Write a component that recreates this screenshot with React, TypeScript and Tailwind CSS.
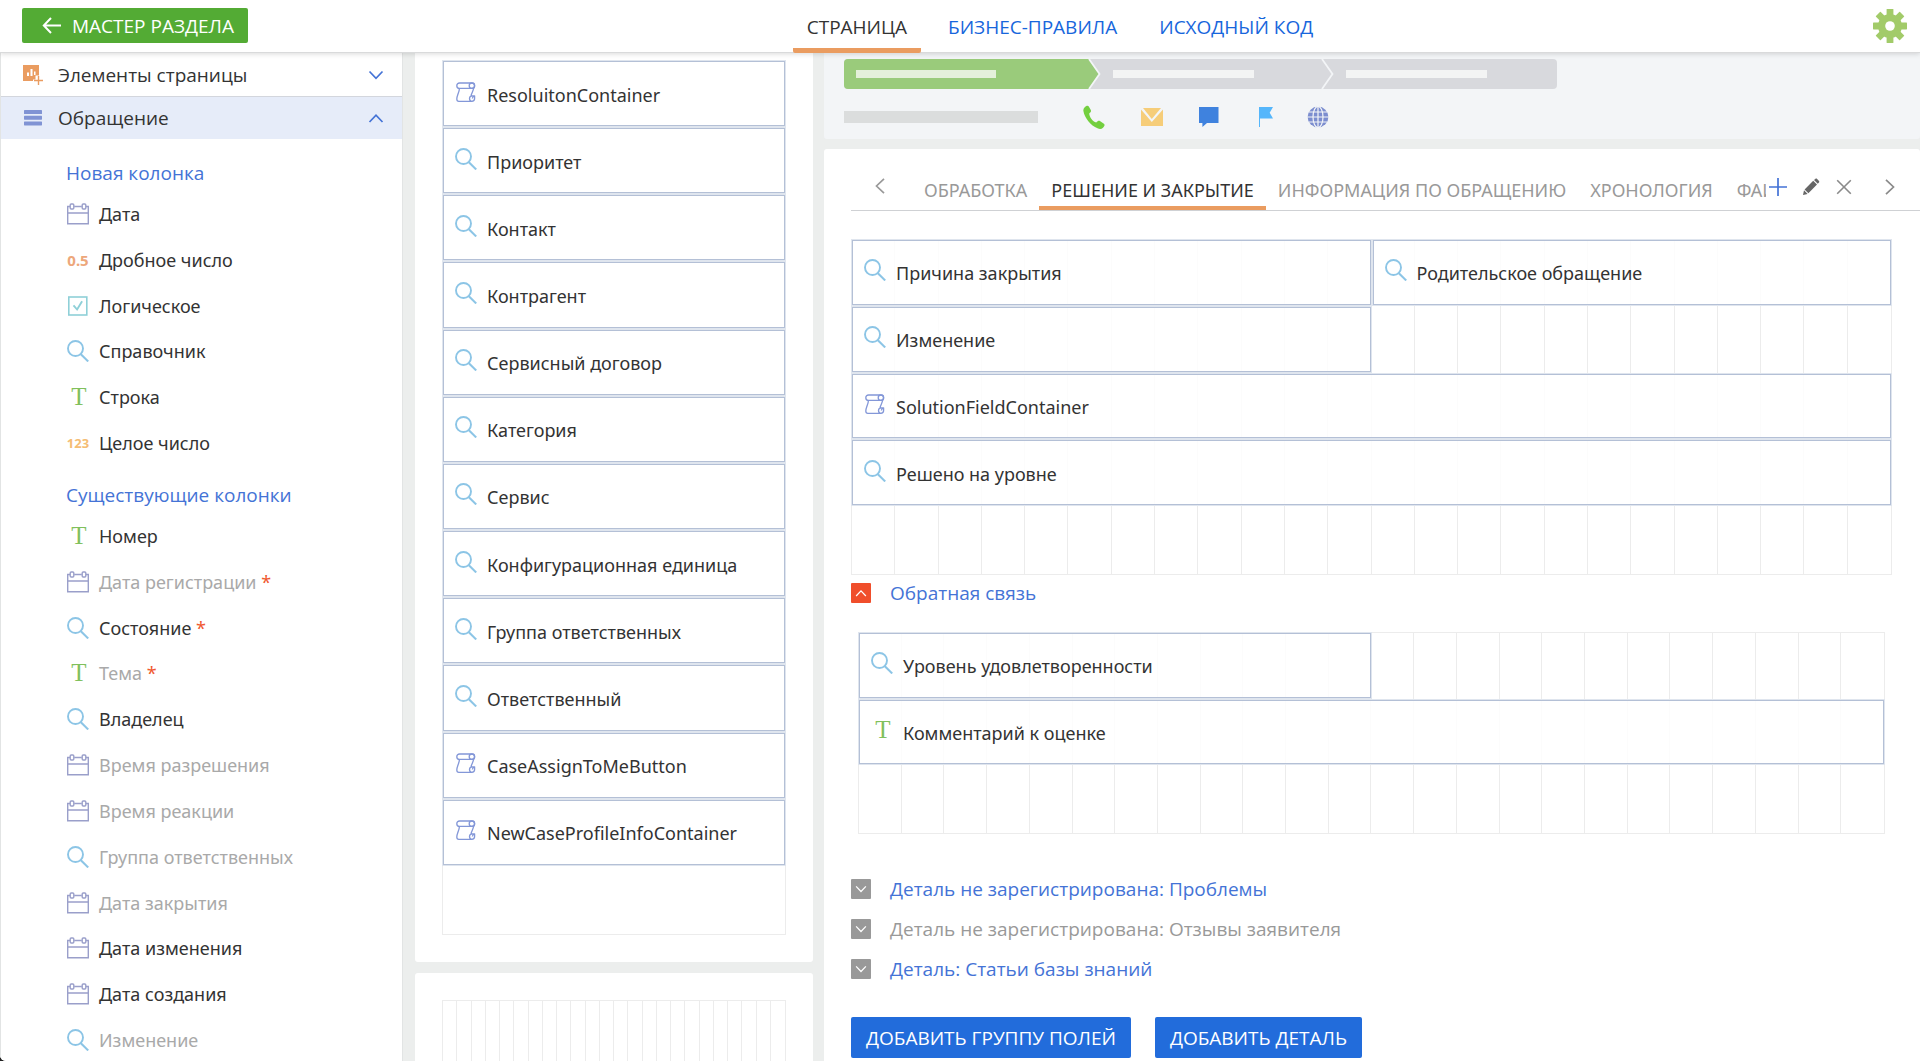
import React from "react";

type Kind = "date" | "float" | "bool" | "lookup" | "string" | "int" | "script";

function TypeIcon({ kind }: { kind: Kind }) {
  if (kind === "date")
    return (
      <svg viewBox="0 0 22 22" className="size-[22px] shrink-0" fill="none" stroke="#9a9fca" strokeWidth="1.4" aria-hidden="true">
        <path d="M3 3.5H.7v17.2h20.6V3.5H19M7.2 3.5h7.6M.7 10h20.6" />
        <rect x="3.2" y="1" width="3.6" height="5" rx="1" />
        <rect x="15.2" y="1" width="3.6" height="5" rx="1" />
      </svg>
    );
  if (kind === "bool")
    return (
      <svg viewBox="0 0 22 22" className="size-[22px] shrink-0" fill="none" stroke="#8fd0d8" strokeWidth="1.6" aria-hidden="true">
        <rect x="1.8" y="2" width="18" height="18" />
        <path d="M6.5 10.3l3.6 4.2 5-8.3" strokeWidth="1.9" />
      </svg>
    );
  if (kind === "lookup")
    return (
      <svg viewBox="0 0 22 22" className="size-[22px] shrink-0" fill="none" stroke="#8cc5e6" strokeWidth="1.9" aria-hidden="true">
        <circle cx="8.5" cy="8.5" r="7.5" />
        <path d="M13.6 14l7.6 7.4" strokeWidth="2.1" />
      </svg>
    );
  if (kind === "script")
    return (
      <svg viewBox="0 0 22 22" className="size-[22px] shrink-0" fill="none" stroke="#8397d8" strokeWidth="1.3" strokeLinejoin="round" aria-hidden="true">
        <rect x="1.800" y="2" width="17.800" height="5.400" rx="2.700" />
        <circle cx="16.900" cy="4.700" r="2.700" />
        <path d="M4.400 7.400C4.400 11 1.800 14.500 1.800 18c0 1.400.8 2.300 2 2.300h13c1.700 0 2.800-1.100 2.800-2.800v-2.700h-2.200c-1.600 0-2.900 1.200-2.900 2.700 0 1.600.9 2.600 2.300 2.800M18.600 7c-.2 3-1.800 4.500-2.700 8M19.600 14.800c-1.500.3-2.100 1.300-2.200 2.700" />
      </svg>
    );
  if (kind === "string")
    return (
      <span aria-hidden="true" className="w-[22px] shrink-0 pl-0.5 text-center font-['Liberation_Serif',serif] text-[25px] leading-[22px] text-[#80c05c]">T</span>
    );
  if (kind === "float")
    return (
      <span aria-hidden="true" className="flex w-[22px] shrink-0 justify-center text-[15px] leading-[22px] font-bold text-[#eda77b]">0.5</span>
    );
  return (
    <span aria-hidden="true" className="flex w-[22px] shrink-0 justify-center text-[13px] leading-[22px] font-bold text-[#f5bd74]">123</span>
  );
}

function Chevron({ d, className }: { d: string; className: string }) {
  return (
    <svg viewBox="0 0 16 16" className={className} fill="none" stroke="currentColor" strokeWidth="1.7" aria-hidden="true">
      <path d={d} />
    </svg>
  );
}
const UP = "M1.500 12L8 5.200l6.500 6.800";
const DOWN = "M1.500 4.500L8 11.300l6.500-6.800";
const LEFT = "M12 .8L4.500 8l7.500 7.200";
const RIGHT = "M4 .8L11.500 8 4 15.200";

type Column = { kind: Kind; label: string; muted?: boolean; required?: boolean };

const newColumns: Column[] = [
  { kind: "date", label: "Дата" },
  { kind: "float", label: "Дробное число" },
  { kind: "bool", label: "Логическое" },
  { kind: "lookup", label: "Справочник" },
  { kind: "string", label: "Строка" },
  { kind: "int", label: "Целое число" },
];

const existingColumns: Column[] = [
  { kind: "string", label: "Номер" },
  { kind: "date", label: "Дата регистрации", muted: true, required: true },
  { kind: "lookup", label: "Состояние", required: true },
  { kind: "string", label: "Тема", muted: true, required: true },
  { kind: "lookup", label: "Владелец" },
  { kind: "date", label: "Время разрешения", muted: true },
  { kind: "date", label: "Время реакции", muted: true },
  { kind: "lookup", label: "Группа ответственных", muted: true },
  { kind: "date", label: "Дата закрытия", muted: true },
  { kind: "date", label: "Дата изменения" },
  { kind: "date", label: "Дата создания" },
  { kind: "lookup", label: "Изменение", muted: true },
];

const profileFields: Column[] = [
  { kind: "script", label: "ResoluitonContainer" },
  { kind: "lookup", label: "Приоритет" },
  { kind: "lookup", label: "Контакт" },
  { kind: "lookup", label: "Контрагент" },
  { kind: "lookup", label: "Сервисный договор" },
  { kind: "lookup", label: "Категория" },
  { kind: "lookup", label: "Сервис" },
  { kind: "lookup", label: "Конфигурационная единица" },
  { kind: "lookup", label: "Группа ответственных" },
  { kind: "lookup", label: "Ответственный" },
  { kind: "script", label: "CaseAssignToMeButton" },
  { kind: "script", label: "NewCaseProfileInfoContainer" },
];

function ColumnList({ items, className }: { items: Column[]; className: string }) {
  return (
    <ul className={`grid auto-rows-fr ${className}`}>
      {items.map((c) => (
        <li key={c.label} className="flex items-center gap-2.5 pl-[66px]">
          <TypeIcon kind={c.kind} />
          <span className={c.muted ? "text-[#a9a9a9]" : "text-[#333]"}>
            {c.label}
            {c.required && <span className="text-[#f0582f]"> *</span>}
          </span>
        </li>
      ))}
    </ul>
  );
}

function Field({ kind, label, className = "" }: { kind: Kind; label: string; className?: string }) {
  return (
    <div className={`flex items-center gap-2.5 border border-[#b4c0d6] bg-white/85 pl-[11px] shadow-[0_0_0_1px_#dfe5ee] ${className}`}>
      <span className="flex pb-1">
        <TypeIcon kind={kind} />
      </span>
      <span className="pt-0.5">{label}</span>
    </div>
  );
}

function GridLines() {
  return (
    <div className="col-start-1 row-start-1 grid grid-cols-24" aria-hidden="true">
      {Array.from({ length: 24 }, (_, i) => (
        <div key={i} className="border-r border-[#ececec] last:border-r-0" />
      ))}
    </div>
  );
}

function FieldGrid({ className, children }: { className: string; children: React.ReactNode }) {
  return (
    <div className={`grid border border-[#ececec] ${className}`}>
      <GridLines />
      <div className="col-start-1 row-start-1 grid auto-rows-fr grid-cols-2">{children}</div>
    </div>
  );
}

function Toggle({ open }: { open?: boolean }) {
  return (
    <span className={`flex size-5 items-center justify-center rounded-[1px] text-white ${open ? "bg-[#f04e2b]" : "bg-[#999]"}`}>
      <Chevron d={open ? UP : DOWN} className="size-3" />
    </span>
  );
}

function GroupHeader({ open, muted, children }: { open?: boolean; muted?: boolean; children: string }) {
  return (
    <button type="button" aria-expanded={!!open} className="flex h-10 items-center gap-[19px] font-['Open_Sans','Noto_Sans',sans-serif] text-[19px]">
      <Toggle open={open} />
      <span className={muted ? "text-[#999]" : "text-[#4473d6]"}>{children}</span>
    </button>
  );
}

function Gear() {
  return (
    <svg viewBox="0 0 34 34" className="size-[34px]" aria-hidden="true">
      <g fill="#a2cb69">
        {[0, 45, 90, 135].map((a) => (
          <rect key={a} x="13.6" y="0" width="6.800" height="34" rx=".6" transform={`rotate(${a} 17 17)`} />
        ))}
        <circle cx="17" cy="17" r="12" />
      </g>
      <circle cx="17" cy="17" r="4.800" fill="#fff" />
    </svg>
  );
}

function Stages() {
  return (
    <div className="flex h-[30px] w-[713px] overflow-hidden rounded-[4px]" aria-hidden="true">
      <svg viewBox="0 0 713 30" className="h-[30px] w-[713px]">
        <rect width="713" height="30" fill="#d8d9dd" />
        <path d="M0 0H245l10.500 15L245 30H0z" fill="#9acb7b" />
        <path d="M245 0l10.500 15L245 30M478 0l10.500 15L478 30" fill="none" stroke="#f3f5f7" strokeWidth="1.800" />
        <rect x="12" y="11" width="140" height="8" fill="#e4f0da" />
        <rect x="269" y="11" width="141" height="8" fill="#f3f4f4" />
        <rect x="502" y="11" width="141" height="8" fill="#f3f4f4" />
      </svg>
    </div>
  );
}

function ContactIcons() {
  return (
    <div className="flex items-center" aria-hidden="true">
      <svg viewBox="0 0 22 24" className="h-6 w-[22px]" fill="#73cf3f">
        <path d="M1.500 2.500C3 .6 5 0 5.800 1.400l2 3.700c.6 1.200-.1 2-1.600 3.300.3 3.800 3.400 8 7 9.200 1.500-1.700 2.600-2.300 3.700-1.600l4 2.700c1.200.9.600 2.400-.9 4-1.300 1.300-3.300 1.600-5.500.6C7.700 20.500 1.600 13 .4 6 .2 4.600.6 3.500 1.500 2.500z" />
      </svg>
      <svg viewBox="0 0 22 18" className="ml-9 h-[18px] w-[22px]">
        <path d="M0 1.500L10.800 14 22 1.500V18H0z" fill="#f6cd79" />
        <path d="M2 0h18l-9.200 11z" fill="#f6cd79" />
      </svg>
      <svg viewBox="0 0 20 20" className="ml-9 size-5" fill="#3f82de">
        <path d="M0 0h19.500v16H8l-4.600 4V16H0z" />
      </svg>
      <svg viewBox="0 0 14 20" className="ml-10 h-5 w-[14px]" fill="#55b6fb">
        <path d="M0 0h14l-3.300 5.700L14 11.500H1V20H0z" />
      </svg>
      <svg viewBox="0 0 22 22" className="ml-[34px] size-[22px]">
        <circle cx="11" cy="11" r="10.400" fill="#7b8dcf" />
        <g fill="none" stroke="#f3f5f7" strokeWidth="1.200">
          <ellipse cx="11" cy="11" rx="5" ry="10.600" />
          <path d="M11 0v22M0 11h22M2 6h18M2 16h18" />
        </g>
      </svg>
    </div>
  );
}

const pageTabs = [
  { label: "ОБРАБОТКА" },
  { label: "РЕШЕНИЕ И ЗАКРЫТИЕ", active: true },
  { label: "ИНФОРМАЦИЯ ПО ОБРАЩЕНИЮ" },
  { label: "ХРОНОЛОГИЯ" },
  { label: "ФАЙЛЫ И ПРИМЕЧАНИЯ" },
];

export default function App() {
  return (
    <div className="h-screen bg-[#222]">
      <div className="flex h-full flex-col overflow-hidden rounded-bl-[6px] bg-[#eceeed] font-['Noto_Sans','Open_Sans',sans-serif] text-[18px] leading-6 text-[#333]">
        <header className="z-10 flex h-[53px] shrink-0 items-stretch justify-between border-b border-[#d9dadb] bg-white pr-[13px] pl-[22px] font-['Open_Sans','Noto_Sans',sans-serif] text-[19px] shadow-[0_1px_5px_rgba(0,0,0,0.15)]">
          <button type="button" className="mt-2 flex h-[35px] items-center gap-2.5 rounded-[2px] bg-[#53ab34] pr-3.5 pl-5 text-white">
            <svg viewBox="0 0 20 20" className="size-5" fill="none" stroke="currentColor" strokeWidth="2" aria-hidden="true">
              <path d="M9 2L1.800 9.500 9 17M1.800 9.500H19" />
            </svg>
            МАСТЕР РАЗДЕЛА
          </button>
          <nav className="-mb-px flex gap-3">
            <a href="#page" aria-current="page" className="flex items-center rounded-b-[2px] border-b-[5px] border-[#ea9c60] px-3.5 pt-[5px]">СТРАНИЦА</a>
            <a href="#rules" className="flex items-center px-[15px] text-[#1766dc]">БИЗНЕС-ПРАВИЛА</a>
            <a href="#source" className="flex items-center px-[15px] text-[#1766dc]">ИСХОДНЫЙ КОД</a>
          </nav>
          <button type="button" aria-label="Настройки" className="flex items-center">
            <Gear />
          </button>
        </header>

        <div className="flex min-h-0 flex-1">
          <aside className="w-[403px] shrink-0 overflow-hidden border-x border-[#e2e4e4] bg-white">
            <div className="font-['Open_Sans','Noto_Sans',sans-serif] text-[19px]">
              <button type="button" aria-expanded={false} className="flex h-11 w-full items-center border-b border-[#d3d6dd] pr-[18px] pl-[22px]">
                <svg viewBox="0 0 20 20" className="size-5" aria-hidden="true">
                  <path d="M0 0h16v10.500h-3.500v4H10V16H0z" fill="#ea9c60" />
                  <path d="M4 7.500h2v3.500H4zM7.500 4h2v7h-2zM11 6.500h1.500V10H11z" fill="#fff" />
                  <path d="M15.500 11v9M11 15.500h9" stroke="#ea9c60" strokeWidth="1.400" />
                </svg>
                <span className="ml-[15px] flex-1 text-left">Элементы страницы</span>
                <Chevron d={DOWN} className="size-4 text-[#4473d6]" />
              </button>
              <button type="button" aria-expanded={true} className="flex h-[42px] w-full items-center bg-[#e6ecf9] pr-[18px] pl-[23px]">
                <svg viewBox="0 0 18 16" className="h-4 w-[18px]" fill="#8093d4" aria-hidden="true">
                  <rect width="18" height="4" rx=".6" />
                  <rect y="5.700" width="18" height="4" rx=".6" />
                  <rect y="11.400" width="18" height="4" rx=".6" />
                </svg>
                <span className="ml-4 flex-1 text-left">Обращение</span>
                <Chevron d={UP} className="size-4 text-[#4473d6]" />
              </button>
            </div>
            <h2 className="mt-[22px] pl-[65px] font-['Open_Sans','Noto_Sans',sans-serif] text-[19px] text-[#4473d6]">Новая колонка</h2>
            <ColumnList items={newColumns} className="mt-1.5 min-h-[275px]" />
            <h2 className="mt-[17px] pl-[65px] font-['Open_Sans','Noto_Sans',sans-serif] text-[19px] text-[#4473d6]">Существующие колонки</h2>
            <ColumnList items={existingColumns} className="mt-1.5 min-h-[550px]" />
          </aside>

          <div className="ml-3 flex w-[398px] shrink-0 flex-col gap-[11px] overflow-hidden">
            <section className="rounded-b-[3px] bg-white px-[27px] pt-[7px] pb-[27px]">
              <div className="grid min-h-[875px] auto-rows-fr border border-[#ececec]">
                {profileFields.map((f) => (
                  <Field key={f.label} {...f} className="mb-0.5" />
                ))}
                <div />
              </div>
            </section>
            <section className="flex-1 rounded-t-[3px] bg-white px-[27px] pt-[27px]">
              <div className="grid h-40 border border-[#ececec]">
                <GridLines />
              </div>
            </section>
          </div>

          <main className="ml-[11px] flex min-w-0 flex-1 flex-col gap-2.5">
            <section className="rounded-b-[3px] bg-[#f3f5f7] pt-1.5 pb-2.5 pl-5">
              <Stages />
              <div className="mt-4 flex items-center">
                <div className="h-3 w-[194px] bg-[#dbdddd]" />
                <div className="ml-[45px]">
                  <ContactIcons />
                </div>
              </div>
            </section>

            <section className="min-h-0 flex-1 rounded-t-[3px] bg-white pl-[27px]">
              <div className="flex h-[62px] items-end border-b border-[#cfd1d4] text-[#999]">
                <button type="button" aria-label="Назад" className="mb-4 ml-[21px]">
                  <Chevron d={LEFT} className="size-4" />
                </button>
                <div role="tablist" className="ml-6 flex min-w-0 flex-1 overflow-hidden">
                  {pageTabs.map((t) => (
                    <button
                      key={t.label}
                      type="button"
                      role="tab"
                      aria-selected={!!t.active}
                      className={`shrink-0 border-b-4 px-3 pb-1 whitespace-nowrap ${t.active ? "border-[#ea9c60] text-[#333]" : "border-transparent"}`}
                    >
                      {t.label}
                    </button>
                  ))}
                </div>
                <div className="mb-[13px] ml-0.5 flex items-center pr-[22px] text-[#8a8a8a]">
                  <button type="button" aria-label="Добавить вкладку">
                    <svg viewBox="0 0 20 20" className="size-5" stroke="#4473d6" strokeWidth="1.700" aria-hidden="true">
                      <path d="M10 1v18M1 10h18" />
                    </svg>
                  </button>
                  <button type="button" aria-label="Изменить вкладку" className="ml-3.5">
                    <svg viewBox="0 0 18 18" className="size-[18px]" fill="#666" aria-hidden="true">
                      <path d="M12 2l1.300-1.100c.6-.5 1.300-.4 1.800.1l1.700 1.700c.6.600.6 1.300.1 1.800L15.800 5.800zM11.200 2.800L15 6.600l-8.600 8.600-3.800-3.800zM2 12.300l3.600 3.600L1 17z" />
                    </svg>
                  </button>
                  <button type="button" aria-label="Удалить вкладку" className="ml-4">
                    <svg viewBox="0 0 16 16" className="size-4" stroke="currentColor" strokeWidth="1.600" aria-hidden="true">
                      <path d="M1.200 1.200l13.600 13.600M14.800 1.200L1.200 14.800" />
                    </svg>
                  </button>
                  <button type="button" aria-label="Вперёд" className="ml-[30px]">
                    <Chevron d={RIGHT} className="size-4" />
                  </button>
                </div>
              </div>

              <div className="pt-[28px] pr-7">
                <FieldGrid className="min-h-[336px]">
                  <Field kind="lookup" label="Причина закрытия" className="mr-px mb-0.5" />
                  <Field kind="lookup" label="Родительское обращение" className="mb-0.5 ml-px" />
                  <Field kind="lookup" label="Изменение" className="mr-px mb-0.5" />
                  <div className="border-b border-[#ececec]" />
                  <Field kind="script" label="SolutionFieldContainer" className="col-span-2 mb-0.5" />
                  <Field kind="lookup" label="Решено на уровне" className="col-span-2 mb-0.5" />
                  <div className="col-span-2" />
                </FieldGrid>

                <div className="-mt-0.5">
                  <GroupHeader open>Обратная связь</GroupHeader>
                </div>
                <div className="mt-[19px] px-[7px]">
                  <FieldGrid className="min-h-[202px]">
                    <Field kind="lookup" label="Уровень удовлетворенности" className="mr-px mb-0.5" />
                    <div className="border-b border-[#ececec]" />
                    <Field kind="string" label="Комментарий к оценке" className="col-span-2 mb-0.5" />
                    <div className="col-span-2" />
                  </FieldGrid>
                </div>

                <div className="mt-[35px] flex flex-col items-start">
                  <GroupHeader>Деталь не зарегистрирована: Проблемы</GroupHeader>
                  <GroupHeader muted>Деталь не зарегистрирована: Отзывы заявителя</GroupHeader>
                  <GroupHeader>Деталь: Статьи базы знаний</GroupHeader>
                </div>

                <div className="mt-7 flex gap-6 font-['Open_Sans','Noto_Sans',sans-serif] text-[19px] text-white">
                  <button type="button" className="h-[41px] rounded-[2px] bg-[#226cdb] px-[15px]">ДОБАВИТЬ ГРУППУ ПОЛЕЙ</button>
                  <button type="button" className="h-[41px] rounded-[2px] bg-[#226cdb] px-[15px]">ДОБАВИТЬ ДЕТАЛЬ</button>
                </div>
              </div>
            </section>
          </main>
        </div>
      </div>
    </div>
  );
}
